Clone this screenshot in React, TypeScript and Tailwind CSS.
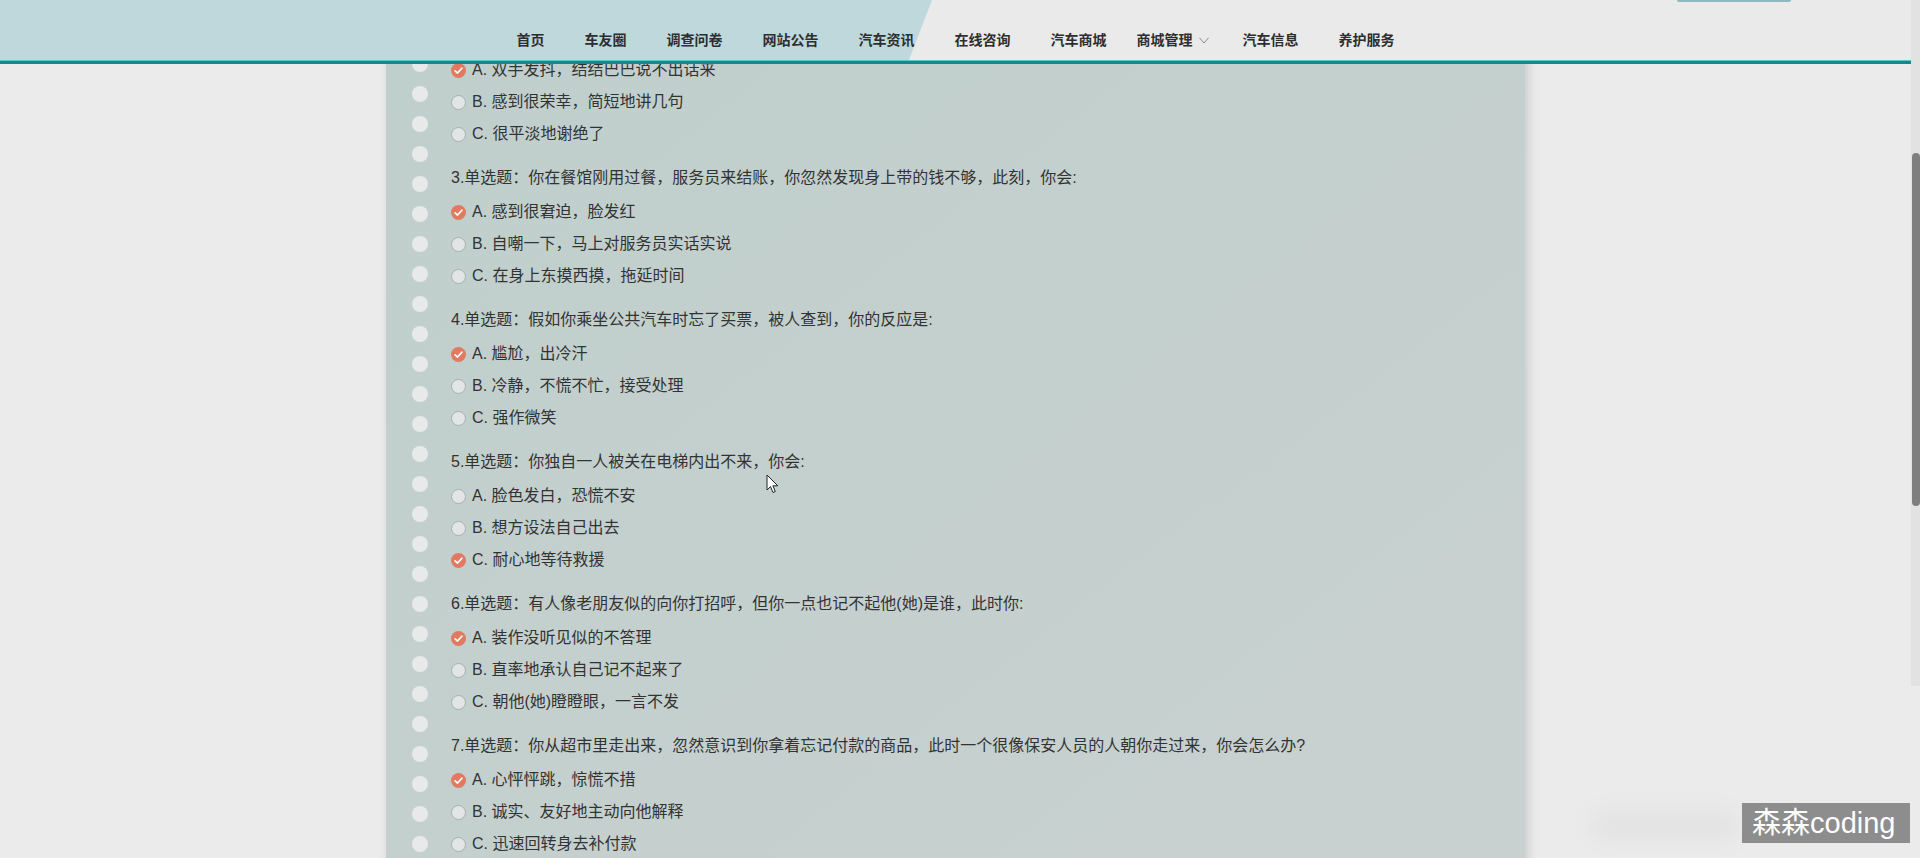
const navItems = ["首页", "车友圈", "调查问卷", "网站公告", "汽车资讯", "在线咨询", "汽车商城"];
const navItemsAfter = ["汽车信息", "养护服务"];

type Question = {
  no: number;
  title: string;
  options: string[];
  checked: number;
};

// question 2 is scrolled up under the fixed header, only its options show
const questions: Question[] = [
  {
    no: 2,
    title: "",
    options: ["双手发抖，结结巴巴说不出话来", "感到很荣幸，简短地讲几句", "很平淡地谢绝了"],
    checked: 0,
  },
  {
    no: 3,
    title: "单选题：你在餐馆刚用过餐，服务员来结账，你忽然发现身上带的钱不够，此刻，你会:",
    options: ["感到很窘迫，脸发红", "自嘲一下，马上对服务员实话实说", "在身上东摸西摸，拖延时间"],
    checked: 0,
  },
  {
    no: 4,
    title: "单选题：假如你乘坐公共汽车时忘了买票，被人查到，你的反应是:",
    options: ["尴尬，出冷汗", "冷静，不慌不忙，接受处理", "强作微笑"],
    checked: 0,
  },
  {
    no: 5,
    title: "单选题：你独自一人被关在电梯内出不来，你会:",
    options: ["脸色发白，恐慌不安", "想方设法自己出去", "耐心地等待救援"],
    checked: 2,
  },
  {
    no: 6,
    title: "单选题：有人像老朋友似的向你打招呼，但你一点也记不起他(她)是谁，此时你:",
    options: ["装作没听见似的不答理", "直率地承认自己记不起来了", "朝他(她)瞪瞪眼，一言不发"],
    checked: 0,
  },
  {
    no: 7,
    title: "单选题：你从超市里走出来，忽然意识到你拿着忘记付款的商品，此时一个很像保安人员的人朝你走过来，你会怎么办?",
    options: ["心怦怦跳，惊慌不措", "诚实、友好地主动向他解释", "迅速回转身去补付款"],
    checked: 0,
  },
];

const letters = ["A", "B", "C"];

function Radio({ on }: { on: boolean }) {
  if (on) {
    return (
      <svg width="15" height="15" viewBox="0 0 16 16" className="shrink-0">
        <circle cx="8" cy="8" r="8" fill="#e17a60" />
        <path d="M4.4 8.3 L7 10.7 L11.6 5.6" fill="none" stroke="#fff" strokeWidth="1.8" strokeLinecap="round" strokeLinejoin="round" />
      </svg>
    );
  }
  return <span className="w-[15px] h-[15px] shrink-0 rounded-full bg-[#e2e5e5] border border-[#a9afaf]" />;
}

function Nav() {
  return (
    <nav className="flex justify-center pt-[30px] text-[14px] leading-[20px] font-bold text-[#2e2e2e]">
      {navItems.map((item) => (
        <span key={item} className="px-[20px]">
          {item}
        </span>
      ))}
      <span className="pl-[10px] pr-[14px] flex items-center gap-[6px]">
        商城管理
        <svg width="10" height="7" viewBox="0 0 10 7">
          <path d="M0.5 0.8 L5 6 L9.5 0.8" fill="none" stroke="#8a8a8a" strokeWidth="1" />
        </svg>
      </span>
      {navItemsAfter.map((item) => (
        <span key={item} className="px-[20px]">
          {item}
        </span>
      ))}
    </nav>
  );
}

export default function App() {
  return (
    <div
      className="relative w-[1920px] h-[858px] overflow-hidden bg-[#ebebeb] flex"
      style={{ fontFamily: '"Liberation Sans", "Noto Sans CJK SC", sans-serif' }}
    >
      {/* page */}
      <main className="flex-1 overflow-hidden">
        <div className="w-[1139px] h-[900px] mx-auto flex bg-gradient-to-br from-[#bfcfcc] to-[#c9d1d0] shadow-[3px_0_10px_rgba(0,0,0,0.14)]">
          <div className="w-[65px] shrink-0 flex flex-col items-center pl-[3px] pt-[26px] gap-[14px]">
            {Array.from({ length: 29 }).map((_, i) => (
              <span key={i} className="w-[16px] h-[16px] rounded-full bg-[#e8e9e9]" />
            ))}
          </div>
          <div className="pt-[20px] text-[16px] text-[#333]">
            {questions.map((q) => (
              <div key={q.no} className="mb-[12px]">
                <div className="h-[32px] flex items-center mb-[2px]">
                  {q.title ? `${q.no}.${q.title}` : null}
                </div>
                {q.options.map((opt, i) => (
                  <div key={opt} className="h-[32px] flex items-center gap-[6px]">
                    <Radio on={q.checked === i} />
                    <span>
                      {letters[i]}. {opt}
                    </span>
                  </div>
                ))}
              </div>
            ))}
          </div>
        </div>
      </main>

      {/* scrollbar */}
      <div className="w-[9px] shrink-0 h-[686px] bg-[#e2e2e2] pt-[153px]">
        <div className="h-[353px] ml-[1px] w-[8px] rounded-[4px] bg-[#7e7e7e]" />
      </div>

      {/* fixed header */}
      <header className="absolute top-0 left-0 w-[1911px] h-[64px] bg-[#eaeaea]">
        <div className="absolute inset-0 bg-[#bed8dc] [clip-path:polygon(0_0,932px_0,909px_60px,0_60px)]" />
        <div className="absolute top-0 left-[1677px] w-[114px] h-[2px] bg-[#8fb9bf] rounded-b" />
        <div className="relative h-[60px]">
          <Nav />
        </div>
        <div className="relative h-[1px] bg-[#5ec6ca]" />
        <div className="relative h-[3px] bg-[#16878c]" />
      </header>

      {/* mouse cursor */}
      <svg className="absolute left-[766px] top-[474px]" width="13" height="20" viewBox="0 0 13 20">
        <path d="M1 1 L1 16 L4.5 12.6 L7 18.5 L9.3 17.5 L6.9 11.8 L11.8 11.8 Z" fill="#fff" stroke="#222" strokeWidth="1" strokeLinejoin="round" />
      </svg>

      {/* blurred shadow left of watermark */}
      <div className="absolute left-[1590px] top-[812px] w-[150px] h-[26px] rounded-full bg-black/[0.04] blur-md" />

      {/* watermark */}
      <div className="absolute left-[1742px] top-[803px] w-[168px] h-[40px] bg-[#8d8d8d] text-white text-[29px] leading-[40px] pl-[10px] whitespace-nowrap">
        森森coding
      </div>
    </div>
  );
}
